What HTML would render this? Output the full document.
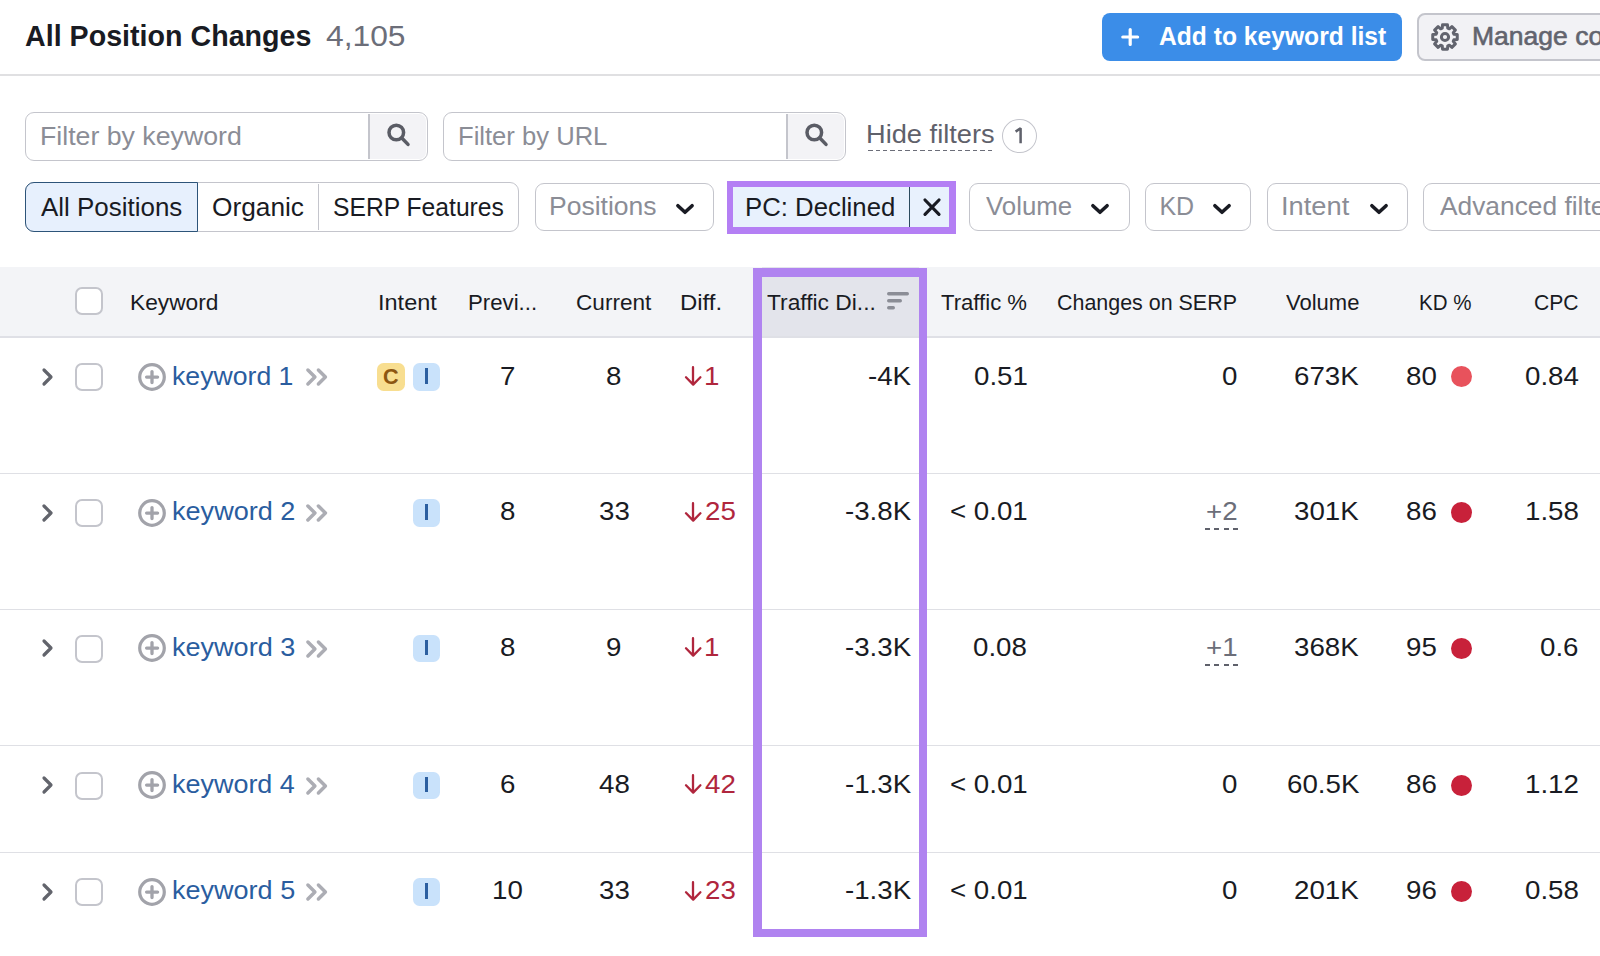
<!DOCTYPE html>
<html><head><meta charset="utf-8"><style>
html,body{margin:0;padding:0;width:1600px;height:956px;overflow:hidden;background:#fff;}
body{position:relative;font-family:"Liberation Sans",sans-serif;}
.t{position:absolute;white-space:nowrap;}
</style></head><body>
<div class="t" style="left:24.64px;top:21.33px;font-size:30.2px;line-height:30.2px;font-weight:700;color:#191b23;transform:scaleX(0.9487);transform-origin:0 0;">All Position Changes</div>
<div class="t" style="left:325.76px;top:21.33px;font-size:30.2px;line-height:30.2px;font-weight:400;color:#6c6e79;transform:scaleX(1.0530);transform-origin:0 0;">4,105</div>
<div style="position:absolute;left:1102px;top:13px;width:300px;height:48px;background:#3b8de8;border-radius:8px;"></div>
<svg style="position:absolute;left:1119px;top:26px" width="22" height="22" viewBox="0 0 22 22"><path d="M11.2 3.6V18.4M3.8 11H18.6" stroke="#fff" stroke-width="3.2" stroke-linecap="round"/></svg>
<div class="t" style="left:1158.84px;top:22.78px;font-size:26px;line-height:26px;font-weight:700;color:#ffffff;transform:scaleX(0.9477);transform-origin:0 0;">Add to keyword list</div>
<div style="position:absolute;left:1417px;top:13px;width:260px;height:48px;background:#f2f2f5;border:2px solid #c4c5cc;border-radius:8px;box-sizing:border-box;"></div>
<svg style="position:absolute;left:1429px;top:21px" width="32" height="32" viewBox="0 0 32 32"><g fill="none" stroke="#62646e" stroke-width="3" stroke-linejoin="round"><path d="M13.25 7.12 L13.52 3.75 L18.48 3.75 L18.75 7.12 L20.34 7.77 L22.91 5.58 L26.42 9.09 L24.23 11.66 L24.88 13.25 L28.25 13.52 L28.25 18.48 L24.88 18.75 L24.23 20.34 L26.42 22.91 L22.91 26.42 L20.34 24.23 L18.75 24.88 L18.48 28.25 L13.52 28.25 L13.25 24.88 L11.66 24.23 L9.09 26.42 L5.58 22.91 L7.77 20.34 L7.12 18.75 L3.75 18.48 L3.75 13.52 L7.12 13.25 L7.77 11.66 L5.58 9.09 L9.09 5.58 L11.66 7.77Z"/><circle cx="16" cy="16" r="3.6"/></g></svg>
<div class="t" style="left:1472.36px;top:22.78px;font-size:26px;line-height:26px;font-weight:400;color:#62646e;transform:scaleX(1.0198);transform-origin:0 0;-webkit-text-stroke:0.6px #62646e;">Manage co</div>
<div style="position:absolute;left:0px;top:74px;width:1600px;height:2px;background:#e0e0e2;"></div>
<div style="position:absolute;left:25px;top:112px;width:403px;height:48.5px;border:1.8px solid #c4c5cc;border-radius:9px;box-sizing:border-box;background:#fff;"></div>
<div style="position:absolute;left:369px;top:113.8px;width:57.2px;height:44.9px;background:#f3f3f6;border-radius:0 7px 7px 0;"></div>
<div style="position:absolute;left:368.2px;top:113.8px;width:1.6px;height:44.9px;background:#c4c5cc;"></div>
<svg style="position:absolute;left:382.5px;top:120px" width="30" height="30" viewBox="0 0 30 30"><g fill="none" stroke="#5a5c65" stroke-width="3.5"><circle cx="13.3" cy="12.5" r="7.3"/><path d="M18.8 18L25 24.4" stroke-linecap="round"/></g></svg>
<div class="t" style="left:40.37px;top:122.63px;font-size:26.3px;line-height:26.3px;font-weight:400;color:#8b8d96;transform:scaleX(1.0154);transform-origin:0 0;">Filter by keyword</div>
<div style="position:absolute;left:443px;top:112px;width:403px;height:48.5px;border:1.8px solid #c4c5cc;border-radius:9px;box-sizing:border-box;background:#fff;"></div>
<div style="position:absolute;left:787px;top:113.8px;width:57.2px;height:44.9px;background:#f3f3f6;border-radius:0 7px 7px 0;"></div>
<div style="position:absolute;left:786.2px;top:113.8px;width:1.6px;height:44.9px;background:#c4c5cc;"></div>
<svg style="position:absolute;left:800.5px;top:120px" width="30" height="30" viewBox="0 0 30 30"><g fill="none" stroke="#5a5c65" stroke-width="3.5"><circle cx="13.3" cy="12.5" r="7.3"/><path d="M18.8 18L25 24.4" stroke-linecap="round"/></g></svg>
<div class="t" style="left:458.46px;top:122.63px;font-size:26.3px;line-height:26.3px;font-weight:400;color:#8b8d96;transform:scaleX(0.9734);transform-origin:0 0;">Filter by URL</div>
<div class="t" style="left:865.75px;top:122.09px;font-size:25.4px;line-height:25.4px;font-weight:400;color:#5f616b;transform:scaleX(1.0726);transform-origin:0 0;">Hide filters</div>
<div style="position:absolute;left:868px;top:149.8px;width:126px;height:1.6px;background:repeating-linear-gradient(90deg,#6c6e79 0 4.5px,transparent 4.5px 7.5px);"></div>
<div style="position:absolute;left:1002.4px;top:119.3px;width:34.4px;height:34.2px;border:1.6px solid #c4c5cc;border-radius:50%;box-sizing:border-box;"></div>
<svg style="position:absolute;left:1010px;top:124px" width="20" height="22" viewBox="0 0 20 22"><path d="M5.6 7.6L10.6 4.2V19.2" fill="none" stroke="#5f616b" stroke-width="2.5" stroke-linejoin="bevel"/></svg>
<div style="position:absolute;left:25px;top:182.3px;width:494.4px;height:49.3px;border:1.7px solid #c4c5cc;border-radius:9px;box-sizing:border-box;"></div>
<div style="position:absolute;left:25px;top:182.3px;width:173px;height:49.3px;background:#e7f0fd;border:1.7px solid #2d5479;border-radius:9px 0 0 9px;box-sizing:border-box;"></div>
<div style="position:absolute;left:317.6px;top:184px;width:1.6px;height:46px;background:#c4c5cc;"></div>
<div class="t" style="left:41.20px;top:194.92px;font-size:25.6px;line-height:25.6px;font-weight:400;color:#191b23;transform:scaleX(1.0137);transform-origin:0 0;">All Positions</div>
<div class="t" style="left:211.77px;top:194.92px;font-size:25.6px;line-height:25.6px;font-weight:400;color:#191b23;transform:scaleX(1.0262);transform-origin:0 0;">Organic</div>
<div class="t" style="left:333.44px;top:194.92px;font-size:25.6px;line-height:25.6px;font-weight:400;color:#191b23;transform:scaleX(0.9635);transform-origin:0 0;">SERP Features</div>
<div style="position:absolute;left:535px;top:182.5px;width:179px;height:48.8px;border:1.8px solid #c4c5cc;border-radius:9px;box-sizing:border-box;"></div>
<div class="t" style="left:549.38px;top:194.43px;font-size:25px;line-height:25px;font-weight:400;color:#8b8d96;transform:scaleX(1.0609);transform-origin:0 0;">Positions</div>
<svg style="position:absolute;left:675px;top:202.2px" width="20" height="14" viewBox="0 0 20 14"><path d="M2.9 3.7L10 10.3L17.1 3.7" fill="none" stroke="#191b23" stroke-width="3.6" stroke-linecap="round" stroke-linejoin="round"/></svg>
<div style="position:absolute;left:727px;top:181px;width:229px;height:53px;background:#b47ff4;"></div>
<div style="position:absolute;left:733.3px;top:187.2px;width:215.6px;height:40px;background:#e8f1fd;"></div>
<div style="position:absolute;left:908.8px;top:187.2px;width:1.6px;height:40px;background:#2b4a5e;"></div>
<div class="t" style="left:744.89px;top:194.52px;font-size:25.6px;line-height:25.6px;font-weight:400;color:#191b23;transform:scaleX(1.0062);transform-origin:0 0;">PC: Declined</div>
<svg style="position:absolute;left:922px;top:197px" width="20" height="20" viewBox="0 0 20 20"><path d="M3 3L17 17.3M17 3L3 17.3" stroke="#191b23" stroke-width="3.2" stroke-linecap="round"/></svg>
<div style="position:absolute;left:969px;top:182.5px;width:161px;height:48.8px;border:1.8px solid #c4c5cc;border-radius:9px;box-sizing:border-box;"></div>
<div class="t" style="left:985.90px;top:194.43px;font-size:25px;line-height:25px;font-weight:400;color:#8b8d96;transform:scaleX(1.0341);transform-origin:0 0;">Volume</div>
<svg style="position:absolute;left:1090px;top:202.2px" width="20" height="14" viewBox="0 0 20 14"><path d="M2.9 3.7L10 10.3L17.1 3.7" fill="none" stroke="#191b23" stroke-width="3.6" stroke-linecap="round" stroke-linejoin="round"/></svg>
<div style="position:absolute;left:1145px;top:182.5px;width:106px;height:48.8px;border:1.8px solid #c4c5cc;border-radius:9px;box-sizing:border-box;"></div>
<div class="t" style="left:1159.40px;top:194.43px;font-size:25px;line-height:25px;font-weight:400;color:#8b8d96;">KD</div>
<svg style="position:absolute;left:1212.3px;top:202.2px" width="20" height="14" viewBox="0 0 20 14"><path d="M2.9 3.7L10 10.3L17.1 3.7" fill="none" stroke="#191b23" stroke-width="3.6" stroke-linecap="round" stroke-linejoin="round"/></svg>
<div style="position:absolute;left:1267px;top:182.5px;width:141px;height:48.8px;border:1.8px solid #c4c5cc;border-radius:9px;box-sizing:border-box;"></div>
<div class="t" style="left:1281.39px;top:194.43px;font-size:25px;line-height:25px;font-weight:400;color:#8b8d96;transform:scaleX(1.0915);transform-origin:0 0;">Intent</div>
<svg style="position:absolute;left:1368.5px;top:202.2px" width="20" height="14" viewBox="0 0 20 14"><path d="M2.9 3.7L10 10.3L17.1 3.7" fill="none" stroke="#191b23" stroke-width="3.6" stroke-linecap="round" stroke-linejoin="round"/></svg>
<div style="position:absolute;left:1423px;top:182.5px;width:300px;height:48.8px;border:1.8px solid #c4c5cc;border-radius:9px;box-sizing:border-box;"></div>
<div class="t" style="left:1439.59px;top:194.43px;font-size:25px;line-height:25px;font-weight:400;color:#8b8d96;transform:scaleX(1.0530);transform-origin:0 0;">Advanced filters</div>
<div style="position:absolute;left:0px;top:267.4px;width:1600px;height:69.6px;background:#f3f4f7;"></div>
<div style="position:absolute;left:762px;top:267.4px;width:157px;height:69.6px;background:#e3e4eb;"></div>
<div style="position:absolute;left:0px;top:336px;width:1600px;height:2px;background:#dfe0e6;"></div>
<div style="position:absolute;left:74.5px;top:287px;width:28px;height:28px;background:#fff;border:2px solid #c4c5cc;border-radius:7px;box-sizing:border-box;"></div>
<div class="t" style="left:130.12px;top:291.64px;font-size:21.8px;line-height:21.8px;font-weight:400;color:#191b23;transform:scaleX(1.0417);transform-origin:0 0;">Keyword</div>
<div class="t" style="left:378.34px;top:291.64px;font-size:21.8px;line-height:21.8px;font-weight:400;color:#191b23;transform:scaleX(1.0782);transform-origin:0 0;">Intent</div>
<div class="t" style="left:467.87px;top:291.64px;font-size:21.8px;line-height:21.8px;font-weight:400;color:#191b23;transform:scaleX(1.0187);transform-origin:0 0;">Previ...</div>
<div class="t" style="left:575.86px;top:291.64px;font-size:21.8px;line-height:21.8px;font-weight:400;color:#191b23;transform:scaleX(1.0364);transform-origin:0 0;">Current</div>
<div class="t" style="left:680.02px;top:291.64px;font-size:21.8px;line-height:21.8px;font-weight:400;color:#191b23;transform:scaleX(1.0983);transform-origin:0 0;">Diff.</div>
<div class="t" style="left:766.98px;top:291.64px;font-size:21.8px;line-height:21.8px;font-weight:400;color:#191b23;transform:scaleX(1.0447);transform-origin:0 0;">Traffic Di...</div>
<div class="t" style="left:941.49px;top:291.64px;font-size:21.8px;line-height:21.8px;font-weight:400;color:#191b23;transform:scaleX(1.0144);transform-origin:0 0;">Traffic %</div>
<div class="t" style="left:1057.42px;top:291.64px;font-size:21.8px;line-height:21.8px;font-weight:400;color:#191b23;transform:scaleX(0.9834);transform-origin:0 0;">Changes on SERP</div>
<div class="t" style="left:1285.90px;top:291.64px;font-size:21.8px;line-height:21.8px;font-weight:400;color:#191b23;transform:scaleX(1.0098);transform-origin:0 0;">Volume</div>
<div class="t" style="left:1419.31px;top:291.64px;font-size:21.8px;line-height:21.8px;font-weight:400;color:#191b23;transform:scaleX(0.9416);transform-origin:0 0;">KD %</div>
<div class="t" style="left:1533.93px;top:291.64px;font-size:21.8px;line-height:21.8px;font-weight:400;color:#191b23;transform:scaleX(0.9683);transform-origin:0 0;">CPC</div>
<svg style="position:absolute;left:886.8px;top:292px" width="22" height="18" viewBox="0 0 22 18"><g fill="#8b8d96"><rect x="0" y="0" width="22" height="3.4" rx="1.7"/><rect x="0" y="7" width="15" height="3.4" rx="1.7"/><rect x="0" y="14" width="8" height="3.4" rx="1.7"/></g></svg>
<div style="position:absolute;left:0px;top:472.75px;width:1600px;height:1.6px;background:#dfe0e5;"></div>
<div style="position:absolute;left:0px;top:608.85px;width:1600px;height:1.6px;background:#dfe0e5;"></div>
<div style="position:absolute;left:0px;top:744.85px;width:1600px;height:1.6px;background:#dfe0e5;"></div>
<div style="position:absolute;left:0px;top:851.9px;width:1600px;height:1.6px;background:#dfe0e5;"></div>
<svg style="position:absolute;left:40px;top:366.7px" width="16" height="20" viewBox="0 0 16 20"><path d="M4 3L11 10L4 17" fill="none" stroke="#62646c" stroke-width="3.2" stroke-linecap="round" stroke-linejoin="round"/></svg>
<div style="position:absolute;left:74.5px;top:363.2px;width:28px;height:28px;background:#fff;border:2px solid #c4c5cc;border-radius:7px;box-sizing:border-box;"></div>
<svg style="position:absolute;left:137px;top:361.7px" width="30" height="30" viewBox="0 0 30 30"><g fill="none" stroke="#a2a3aa" stroke-width="3.2"><circle cx="15" cy="15" r="12.3"/><path d="M15 9.6V20.6M9.6 15.1H20.6" stroke-width="3.3" stroke-linecap="round"/></g></svg>
<div class="t" style="left:172.19px;top:363.53px;font-size:25px;line-height:25px;font-weight:400;color:#2a5d9f;transform:scaleX(1.0658);transform-origin:0 0;">keyword 1</div>
<svg style="position:absolute;left:304px;top:367.09999999999997px" width="26" height="20" viewBox="0 0 26 20"><g fill="none" stroke="#acadb4" stroke-width="3.5" stroke-linecap="round" stroke-linejoin="round"><path d="M3.9 3L10.9 10L3.9 17M14.4 3L21.4 10L14.4 17"/></g></svg>
<div style="position:absolute;left:377.4px;top:363.2px;width:27.2px;height:27.5px;background:#f8de90;border-radius:6.5px;"></div>
<div class="t" style="left:383.34px;top:365.75px;font-size:22.5px;line-height:22.5px;font-weight:700;color:#8d5611;transform:scaleX(0.9592);transform-origin:0 0;">C</div>
<div style="position:absolute;left:413px;top:363.2px;width:27.2px;height:27.5px;background:#c9e2fb;border-radius:6.5px;"></div>
<div style="position:absolute;left:425px;top:368.2px;width:3.3px;height:15.6px;background:#2c5fa0;"></div>
<div class="t" style="left:500.28px;top:362.68px;font-size:26px;line-height:26px;font-weight:400;color:#191b23;transform:scaleX(1.0650);transform-origin:0 0;">7</div>
<div class="t" style="left:606.33px;top:362.68px;font-size:26px;line-height:26px;font-weight:400;color:#191b23;transform:scaleX(1.0650);transform-origin:0 0;">8</div>
<svg style="position:absolute;left:683px;top:364.7px" width="20" height="22" viewBox="0 0 20 22"><path d="M10 2.2V19.6M3 12.3L10.2 19.6L17.4 12.3" fill="none" stroke="#b0263d" stroke-width="2.3" stroke-linejoin="round" stroke-linecap="round"/></svg>
<div class="t" style="left:703.87px;top:362.68px;font-size:26px;line-height:26px;font-weight:400;color:#b0263d;transform:scaleX(1.0650);transform-origin:0 0;">1</div>
<div class="t" style="left:868.29px;top:362.68px;font-size:26px;line-height:26px;font-weight:400;color:#191b23;transform:scaleX(1.0650);transform-origin:0 0;">-4K</div>
<div class="t" style="left:973.50px;top:362.68px;font-size:26px;line-height:26px;font-weight:400;color:#191b23;transform:scaleX(1.0650);transform-origin:0 0;">0.51</div>
<div class="t" style="left:1222.12px;top:362.68px;font-size:26px;line-height:26px;font-weight:400;color:#191b23;transform:scaleX(1.0650);transform-origin:0 0;">0</div>
<div class="t" style="left:1294.27px;top:362.68px;font-size:26px;line-height:26px;font-weight:400;color:#191b23;transform:scaleX(1.0650);transform-origin:0 0;">673K</div>
<div class="t" style="left:1406.18px;top:362.68px;font-size:26px;line-height:26px;font-weight:400;color:#191b23;transform:scaleX(1.0650);transform-origin:0 0;">80</div>
<div style="position:absolute;left:1451px;top:366.20px;width:21px;height:21px;border-radius:50%;background:#e8525c;"></div>
<div class="t" style="left:1524.66px;top:362.68px;font-size:26px;line-height:26px;font-weight:400;color:#191b23;transform:scaleX(1.0650);transform-origin:0 0;">0.84</div>
<svg style="position:absolute;left:40px;top:502.5px" width="16" height="20" viewBox="0 0 16 20"><path d="M4 3L11 10L4 17" fill="none" stroke="#62646c" stroke-width="3.2" stroke-linecap="round" stroke-linejoin="round"/></svg>
<div style="position:absolute;left:74.5px;top:499.0px;width:28px;height:28px;background:#fff;border:2px solid #c4c5cc;border-radius:7px;box-sizing:border-box;"></div>
<svg style="position:absolute;left:137px;top:497.5px" width="30" height="30" viewBox="0 0 30 30"><g fill="none" stroke="#a2a3aa" stroke-width="3.2"><circle cx="15" cy="15" r="12.3"/><path d="M15 9.6V20.6M9.6 15.1H20.6" stroke-width="3.3" stroke-linecap="round"/></g></svg>
<div class="t" style="left:172.16px;top:499.33px;font-size:25px;line-height:25px;font-weight:400;color:#2a5d9f;transform:scaleX(1.0829);transform-origin:0 0;">keyword 2</div>
<svg style="position:absolute;left:304px;top:502.9px" width="26" height="20" viewBox="0 0 26 20"><g fill="none" stroke="#acadb4" stroke-width="3.5" stroke-linecap="round" stroke-linejoin="round"><path d="M3.9 3L10.9 10L3.9 17M14.4 3L21.4 10L14.4 17"/></g></svg>
<div style="position:absolute;left:413px;top:499.0px;width:27.2px;height:27.5px;background:#c9e2fb;border-radius:6.5px;"></div>
<div style="position:absolute;left:425px;top:504.0px;width:3.3px;height:15.6px;background:#2c5fa0;"></div>
<div class="t" style="left:500.33px;top:498.48px;font-size:26px;line-height:26px;font-weight:400;color:#191b23;transform:scaleX(1.0650);transform-origin:0 0;">8</div>
<div class="t" style="left:598.66px;top:498.48px;font-size:26px;line-height:26px;font-weight:400;color:#191b23;transform:scaleX(1.0650);transform-origin:0 0;">33</div>
<svg style="position:absolute;left:683px;top:500.5px" width="20" height="22" viewBox="0 0 20 22"><path d="M10 2.2V19.6M3 12.3L10.2 19.6L17.4 12.3" fill="none" stroke="#b0263d" stroke-width="2.3" stroke-linejoin="round" stroke-linecap="round"/></svg>
<div class="t" style="left:704.62px;top:498.48px;font-size:26px;line-height:26px;font-weight:400;color:#b0263d;transform:scaleX(1.0650);transform-origin:0 0;">25</div>
<div class="t" style="left:845.18px;top:498.48px;font-size:26px;line-height:26px;font-weight:400;color:#191b23;transform:scaleX(1.0650);transform-origin:0 0;">-3.8K</div>
<div class="t" style="left:949.53px;top:498.48px;font-size:26px;line-height:26px;font-weight:400;color:#191b23;transform:scaleX(1.0650);transform-origin:0 0;">< 0.01</div>
<div class="t" style="left:1206.25px;top:498.48px;font-size:26px;line-height:26px;font-weight:400;color:#6c6e79;transform:scaleX(1.0650);transform-origin:0 0;">+2</div>
<div style="position:absolute;left:1204.6px;top:528.4px;width:33px;height:1.7px;background:repeating-linear-gradient(90deg,#5f616b 0 5px,transparent 5px 9.3px);"></div>
<div class="t" style="left:1294.27px;top:498.48px;font-size:26px;line-height:26px;font-weight:400;color:#191b23;transform:scaleX(1.0650);transform-origin:0 0;">301K</div>
<div class="t" style="left:1406.39px;top:498.48px;font-size:26px;line-height:26px;font-weight:400;color:#191b23;transform:scaleX(1.0650);transform-origin:0 0;">86</div>
<div style="position:absolute;left:1451px;top:502.00px;width:21px;height:21px;border-radius:50%;background:#c8213a;"></div>
<div class="t" style="left:1525.09px;top:498.48px;font-size:26px;line-height:26px;font-weight:400;color:#191b23;transform:scaleX(1.0650);transform-origin:0 0;">1.58</div>
<svg style="position:absolute;left:40px;top:638.3000000000001px" width="16" height="20" viewBox="0 0 16 20"><path d="M4 3L11 10L4 17" fill="none" stroke="#62646c" stroke-width="3.2" stroke-linecap="round" stroke-linejoin="round"/></svg>
<div style="position:absolute;left:74.5px;top:634.8000000000001px;width:28px;height:28px;background:#fff;border:2px solid #c4c5cc;border-radius:7px;box-sizing:border-box;"></div>
<svg style="position:absolute;left:137px;top:633.3000000000001px" width="30" height="30" viewBox="0 0 30 30"><g fill="none" stroke="#a2a3aa" stroke-width="3.2"><circle cx="15" cy="15" r="12.3"/><path d="M15 9.6V20.6M9.6 15.1H20.6" stroke-width="3.3" stroke-linecap="round"/></g></svg>
<div class="t" style="left:172.16px;top:635.13px;font-size:25px;line-height:25px;font-weight:400;color:#2a5d9f;transform:scaleX(1.0819);transform-origin:0 0;">keyword 3</div>
<svg style="position:absolute;left:304px;top:638.7px" width="26" height="20" viewBox="0 0 26 20"><g fill="none" stroke="#acadb4" stroke-width="3.5" stroke-linecap="round" stroke-linejoin="round"><path d="M3.9 3L10.9 10L3.9 17M14.4 3L21.4 10L14.4 17"/></g></svg>
<div style="position:absolute;left:413px;top:634.8000000000001px;width:27.2px;height:27.5px;background:#c9e2fb;border-radius:6.5px;"></div>
<div style="position:absolute;left:425px;top:639.8000000000001px;width:3.3px;height:15.6px;background:#2c5fa0;"></div>
<div class="t" style="left:500.33px;top:634.28px;font-size:26px;line-height:26px;font-weight:400;color:#191b23;transform:scaleX(1.0650);transform-origin:0 0;">8</div>
<div class="t" style="left:606.33px;top:634.28px;font-size:26px;line-height:26px;font-weight:400;color:#191b23;transform:scaleX(1.0650);transform-origin:0 0;">9</div>
<svg style="position:absolute;left:683px;top:636.3000000000001px" width="20" height="22" viewBox="0 0 20 22"><path d="M10 2.2V19.6M3 12.3L10.2 19.6L17.4 12.3" fill="none" stroke="#b0263d" stroke-width="2.3" stroke-linejoin="round" stroke-linecap="round"/></svg>
<div class="t" style="left:703.87px;top:634.28px;font-size:26px;line-height:26px;font-weight:400;color:#b0263d;transform:scaleX(1.0650);transform-origin:0 0;">1</div>
<div class="t" style="left:845.18px;top:634.28px;font-size:26px;line-height:26px;font-weight:400;color:#191b23;transform:scaleX(1.0650);transform-origin:0 0;">-3.3K</div>
<div class="t" style="left:973.39px;top:634.28px;font-size:26px;line-height:26px;font-weight:400;color:#191b23;transform:scaleX(1.0650);transform-origin:0 0;">0.08</div>
<div class="t" style="left:1206.25px;top:634.28px;font-size:26px;line-height:26px;font-weight:400;color:#6c6e79;transform:scaleX(1.0650);transform-origin:0 0;">+1</div>
<div style="position:absolute;left:1204.6px;top:664.2px;width:33px;height:1.7px;background:repeating-linear-gradient(90deg,#5f616b 0 5px,transparent 5px 9.3px);"></div>
<div class="t" style="left:1294.27px;top:634.28px;font-size:26px;line-height:26px;font-weight:400;color:#191b23;transform:scaleX(1.0650);transform-origin:0 0;">368K</div>
<div class="t" style="left:1406.29px;top:634.28px;font-size:26px;line-height:26px;font-weight:400;color:#191b23;transform:scaleX(1.0650);transform-origin:0 0;">95</div>
<div style="position:absolute;left:1451px;top:637.80px;width:21px;height:21px;border-radius:50%;background:#c8213a;"></div>
<div class="t" style="left:1540.42px;top:634.28px;font-size:26px;line-height:26px;font-weight:400;color:#191b23;transform:scaleX(1.0650);transform-origin:0 0;">0.6</div>
<svg style="position:absolute;left:40px;top:775.3000000000001px" width="16" height="20" viewBox="0 0 16 20"><path d="M4 3L11 10L4 17" fill="none" stroke="#62646c" stroke-width="3.2" stroke-linecap="round" stroke-linejoin="round"/></svg>
<div style="position:absolute;left:74.5px;top:771.8000000000001px;width:28px;height:28px;background:#fff;border:2px solid #c4c5cc;border-radius:7px;box-sizing:border-box;"></div>
<svg style="position:absolute;left:137px;top:770.3000000000001px" width="30" height="30" viewBox="0 0 30 30"><g fill="none" stroke="#a2a3aa" stroke-width="3.2"><circle cx="15" cy="15" r="12.3"/><path d="M15 9.6V20.6M9.6 15.1H20.6" stroke-width="3.3" stroke-linecap="round"/></g></svg>
<div class="t" style="left:172.17px;top:772.13px;font-size:25px;line-height:25px;font-weight:400;color:#2a5d9f;transform:scaleX(1.0780);transform-origin:0 0;">keyword 4</div>
<svg style="position:absolute;left:304px;top:775.7px" width="26" height="20" viewBox="0 0 26 20"><g fill="none" stroke="#acadb4" stroke-width="3.5" stroke-linecap="round" stroke-linejoin="round"><path d="M3.9 3L10.9 10L3.9 17M14.4 3L21.4 10L14.4 17"/></g></svg>
<div style="position:absolute;left:413px;top:771.8000000000001px;width:27.2px;height:27.5px;background:#c9e2fb;border-radius:6.5px;"></div>
<div style="position:absolute;left:425px;top:776.8000000000001px;width:3.3px;height:15.6px;background:#2c5fa0;"></div>
<div class="t" style="left:500.23px;top:771.28px;font-size:26px;line-height:26px;font-weight:400;color:#191b23;transform:scaleX(1.0650);transform-origin:0 0;">6</div>
<div class="t" style="left:598.88px;top:771.28px;font-size:26px;line-height:26px;font-weight:400;color:#191b23;transform:scaleX(1.0650);transform-origin:0 0;">48</div>
<svg style="position:absolute;left:683px;top:773.3000000000001px" width="20" height="22" viewBox="0 0 20 22"><path d="M10 2.2V19.6M3 12.3L10.2 19.6L17.4 12.3" fill="none" stroke="#b0263d" stroke-width="2.3" stroke-linejoin="round" stroke-linecap="round"/></svg>
<div class="t" style="left:705.36px;top:771.28px;font-size:26px;line-height:26px;font-weight:400;color:#b0263d;transform:scaleX(1.0650);transform-origin:0 0;">42</div>
<div class="t" style="left:845.18px;top:771.28px;font-size:26px;line-height:26px;font-weight:400;color:#191b23;transform:scaleX(1.0650);transform-origin:0 0;">-1.3K</div>
<div class="t" style="left:949.53px;top:771.28px;font-size:26px;line-height:26px;font-weight:400;color:#191b23;transform:scaleX(1.0650);transform-origin:0 0;">< 0.01</div>
<div class="t" style="left:1222.12px;top:771.28px;font-size:26px;line-height:26px;font-weight:400;color:#191b23;transform:scaleX(1.0650);transform-origin:0 0;">0</div>
<div class="t" style="left:1286.61px;top:771.28px;font-size:26px;line-height:26px;font-weight:400;color:#191b23;transform:scaleX(1.0650);transform-origin:0 0;">60.5K</div>
<div class="t" style="left:1406.39px;top:771.28px;font-size:26px;line-height:26px;font-weight:400;color:#191b23;transform:scaleX(1.0650);transform-origin:0 0;">86</div>
<div style="position:absolute;left:1451px;top:774.80px;width:21px;height:21px;border-radius:50%;background:#c8213a;"></div>
<div class="t" style="left:1525.20px;top:771.28px;font-size:26px;line-height:26px;font-weight:400;color:#191b23;transform:scaleX(1.0650);transform-origin:0 0;">1.12</div>
<svg style="position:absolute;left:40px;top:881.5px" width="16" height="20" viewBox="0 0 16 20"><path d="M4 3L11 10L4 17" fill="none" stroke="#62646c" stroke-width="3.2" stroke-linecap="round" stroke-linejoin="round"/></svg>
<div style="position:absolute;left:74.5px;top:878.0px;width:28px;height:28px;background:#fff;border:2px solid #c4c5cc;border-radius:7px;box-sizing:border-box;"></div>
<svg style="position:absolute;left:137px;top:876.5px" width="30" height="30" viewBox="0 0 30 30"><g fill="none" stroke="#a2a3aa" stroke-width="3.2"><circle cx="15" cy="15" r="12.3"/><path d="M15 9.6V20.6M9.6 15.1H20.6" stroke-width="3.3" stroke-linecap="round"/></g></svg>
<div class="t" style="left:172.16px;top:878.33px;font-size:25px;line-height:25px;font-weight:400;color:#2a5d9f;transform:scaleX(1.0809);transform-origin:0 0;">keyword 5</div>
<svg style="position:absolute;left:304px;top:881.9px" width="26" height="20" viewBox="0 0 26 20"><g fill="none" stroke="#acadb4" stroke-width="3.5" stroke-linecap="round" stroke-linejoin="round"><path d="M3.9 3L10.9 10L3.9 17M14.4 3L21.4 10L14.4 17"/></g></svg>
<div style="position:absolute;left:413px;top:878.0px;width:27.2px;height:27.5px;background:#c9e2fb;border-radius:6.5px;"></div>
<div style="position:absolute;left:425px;top:883.0px;width:3.3px;height:15.6px;background:#2c5fa0;"></div>
<div class="t" style="left:492.02px;top:877.48px;font-size:26px;line-height:26px;font-weight:400;color:#191b23;transform:scaleX(1.0650);transform-origin:0 0;">10</div>
<div class="t" style="left:598.66px;top:877.48px;font-size:26px;line-height:26px;font-weight:400;color:#191b23;transform:scaleX(1.0650);transform-origin:0 0;">33</div>
<svg style="position:absolute;left:683px;top:879.5px" width="20" height="22" viewBox="0 0 20 22"><path d="M10 2.2V19.6M3 12.3L10.2 19.6L17.4 12.3" fill="none" stroke="#b0263d" stroke-width="2.3" stroke-linejoin="round" stroke-linecap="round"/></svg>
<div class="t" style="left:704.62px;top:877.48px;font-size:26px;line-height:26px;font-weight:400;color:#b0263d;transform:scaleX(1.0650);transform-origin:0 0;">23</div>
<div class="t" style="left:845.18px;top:877.48px;font-size:26px;line-height:26px;font-weight:400;color:#191b23;transform:scaleX(1.0650);transform-origin:0 0;">-1.3K</div>
<div class="t" style="left:949.53px;top:877.48px;font-size:26px;line-height:26px;font-weight:400;color:#191b23;transform:scaleX(1.0650);transform-origin:0 0;">< 0.01</div>
<div class="t" style="left:1222.12px;top:877.48px;font-size:26px;line-height:26px;font-weight:400;color:#191b23;transform:scaleX(1.0650);transform-origin:0 0;">0</div>
<div class="t" style="left:1294.27px;top:877.48px;font-size:26px;line-height:26px;font-weight:400;color:#191b23;transform:scaleX(1.0650);transform-origin:0 0;">201K</div>
<div class="t" style="left:1406.39px;top:877.48px;font-size:26px;line-height:26px;font-weight:400;color:#191b23;transform:scaleX(1.0650);transform-origin:0 0;">96</div>
<div style="position:absolute;left:1451px;top:881.00px;width:21px;height:21px;border-radius:50%;background:#c8213a;"></div>
<div class="t" style="left:1525.09px;top:877.48px;font-size:26px;line-height:26px;font-weight:400;color:#191b23;transform:scaleX(1.0650);transform-origin:0 0;">0.58</div>
<div style="position:absolute;left:753px;top:267.8px;width:174px;height:669.2px;border-style:solid;border-color:#b083f0;border-width:9.3px 8px 8.2px 9px;box-sizing:border-box;"></div>
</body></html>
